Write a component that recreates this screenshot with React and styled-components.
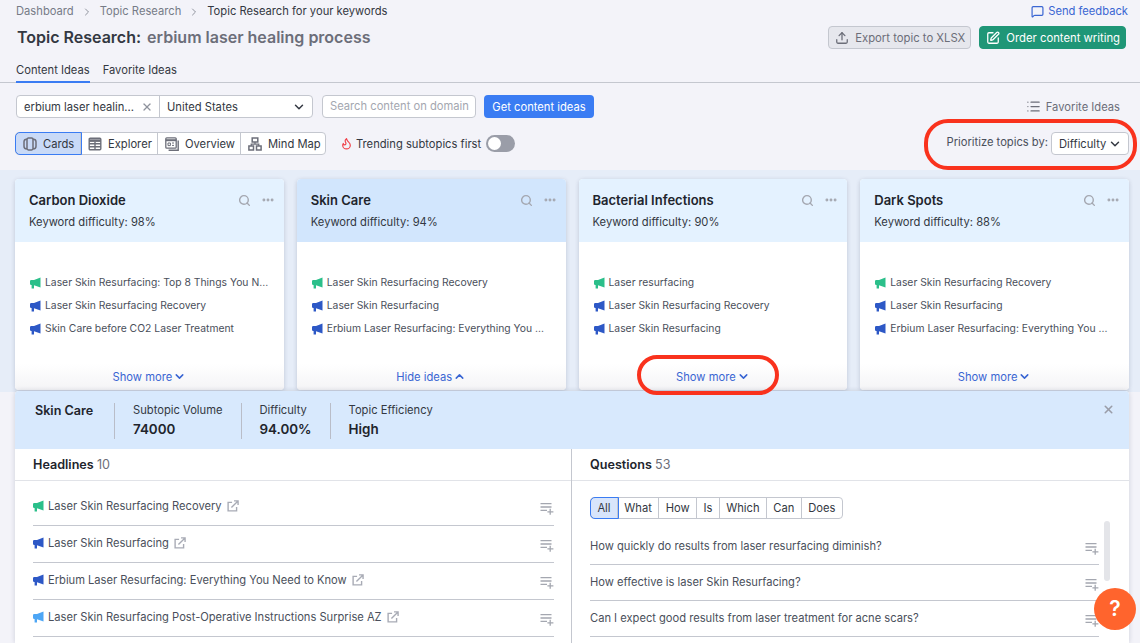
import React from "react";
import styled, { createGlobalStyle } from "styled-components";
import {
  ChevronDown, ChevronUp, ChevronRight, X, Upload, SquarePen, List, Search, Ellipsis,
  MessageSquare, Flame,
} from "lucide-react";

const GlobalStyle = createGlobalStyle`
  html, body { margin: 0; padding: 0; height: 643px; overflow: hidden; background: #f3f3f9; }
  body { font-family: Inter, "Liberation Sans", sans-serif; font-size: 11.2px; color: #333842; }
  * { box-sizing: border-box; }
`;

const Page = styled.div`
  position: relative;
  width: 1140px;
  height: 643px;
  overflow: hidden;
`;

const Head = styled.div`
  height: 83px;
  border-bottom: 1px solid #c4c7cf;
  display: flex;
  flex-direction: column;
`;

const Crumbs = styled.div`
  height: 24px;
  padding: 5px 12px 0 16px;
  display: flex;
  align-items: flex-start;
  color: #767b87;
  line-height: 13px;
  svg { margin: 1px 7px 0; color: #8f939d; }
  b { font-weight: 400; color: #333842; }
`;

const Feedback = styled.a`
  margin-left: auto;
  color: #3a66d3;
  display: flex;
  align-items: center;
  gap: 4px;
  svg { margin: 0; color: #3a66d3; }
`;

const TitleRow = styled.div`
  height: 27px;
  padding: 0 14px 0 18px;
  display: flex;
  align-items: center;
`;

const Title = styled.h1`
  margin: 0 0 0 -1px;
  font-size: 16px;
  font-weight: 600;
  color: #333842;
  span { color: #6c6e79; margin-left: 6px; }
`;

const TitleActions = styled.div`
  margin: 2px 0 0 auto;
  display: flex;
  gap: 8px;
`;

const ActionButton = styled.button`
  height: 23px;
  padding: 0 5px 0 6px;
  border-radius: 4px;
  font: 400 11.3px Inter, sans-serif;
  display: flex;
  align-items: center;
  gap: 6px;
  border: 1px solid ${(p) => (p.$green ? "#1f9677" : "#c4c7cf")};
  background: ${(p) => (p.$green ? "#1f9677" : "#e6e7ed")};
  color: ${(p) => (p.$green ? "#fff" : "#6c6e79")};
`;

const Tabs = styled.div`
  margin-top: 13px;
  padding-left: 16px;
  display: flex;
  gap: 13px;
  height: 19px;
`;

const Tab = styled.div`
  line-height: 15px;
  color: #333842;
  margin-bottom: -1px;
  border-bottom: ${(p) => (p.$active ? "2px solid #3a7cf3" : "none")};
`;

const Controls = styled.div`
  height: 87px;
  padding: 12px 11px 0 15px;
  display: grid;
  grid-template-columns: 1fr auto;
  grid-template-rows: 23px 23px;
  row-gap: 14px;
  align-items: center;
`;

const Row = styled.div`
  display: flex;
  align-items: center;
`;

const Combined = styled.div`
  display: flex;
  width: 297px;
  height: 23px;
  margin-left: 1px;
  border: 1px solid #c4c7cf;
  border-radius: 4px;
  background: #fff;
`;

const KeywordInput = styled.div`
  width: 143px;
  padding: 0 6px 0 7px;
  border-right: 1px solid #c4c7cf;
  display: flex;
  align-items: center;
  justify-content: space-between;
  color: #333842;
  white-space: nowrap;
  svg { color: #8f939d; flex: none; }
`;

const CountrySelect = styled.div`
  flex: 1;
  padding: 0 6px 0 7px;
  display: flex;
  align-items: center;
  justify-content: space-between;
  color: #333842;
`;

const DomainInput = styled.div`
  width: 154px;
  height: 23px;
  margin-left: 9px;
  padding: 0 7px;
  border: 1px solid #c4c7cf;
  border-radius: 4px;
  background: #fff;
  color: #a4a7b0;
  line-height: 21px;
  white-space: nowrap;
  overflow: hidden;
`;

const Primary = styled.button`
  width: 110px;
  height: 23px;
  margin-left: 8px;
  border: 0;
  border-radius: 4px;
  background: #3a7cf3;
  color: #fff;
  font: 400 11.2px Inter, sans-serif;
`;

const FavoriteLink = styled.div`
  justify-self: end;
  margin-right: 9px;
  display: flex;
  align-items: center;
  gap: 5px;
  color: #6c6e79;
`;

const ViewGroup = styled.div`
  display: flex;
  height: 23px;
  width: 311px;
  border: 1px solid #c4c7cf;
  border-radius: 4px;
  background: #fff;
`;

const ViewButton = styled.div`
  width: ${(p) => p.$w}px;
  display: flex;
  align-items: center;
  gap: 6px;
  padding-left: 7px;
  color: #333842;
  border-right: ${(p) => (p.$last ? "none" : "1px solid #c4c7cf")};
  svg { color: #6c6e79; flex: none; }
  ${(p) => p.$active && `
    background: #c9daf7;
    outline: 1px solid #3a7cf3;
    border-radius: 4px 0 0 4px;
  `}
`;

const Trending = styled.div`
  margin-left: 14px;
  display: flex;
  align-items: center;
  gap: 3px;
  color: #333842;
  svg { color: #f0424b; }
`;

const Toggle = styled.div`
  width: 29px;
  height: 17px;
  margin-left: 5px;
  padding: 2px;
  border-radius: 9px;
  background: #9a9da8;
  &::before {
    content: "";
    display: block;
    width: 13px;
    height: 13px;
    border-radius: 50%;
    background: #fff;
  }
`;

const Prioritize = styled.div`
  display: flex;
  align-items: center;
  gap: 3px;
  color: #4a4f5b;
  span { margin-top: -3px; }
`;

const SortSelect = styled.div`
  width: 78px;
  height: 23px;
  padding: 0 6px 0 7px;
  border: 1px solid #c4c7cf;
  border-radius: 4px;
  background: #fff;
  color: #333842;
  display: flex;
  align-items: center;
  justify-content: space-between;
`;

const Band = styled.div`
  height: 222px;
  padding: 9px 11px 0 15px;
  background: #e6edf8;
  display: grid;
  grid-template-columns: repeat(4, 1fr);
  column-gap: 13px;
`;

const Card = styled.div`
  height: 211px;
  border-radius: 4px;
  background: #fff;
  box-shadow: 0 1px 4px rgba(50, 60, 90, 0.22);
  overflow: hidden;
  display: flex;
  flex-direction: column;
`;

const CardHead = styled.div`
  height: 63px;
  padding: 13px 9px 0 14px;
  background: ${(p) => (p.$active ? "#d2e6fd" : "#e4f2ff")};
  line-height: 13px;
`;

const CardTitleRow = styled.div`
  display: flex;
  align-items: center;
  height: 16px;
  margin-bottom: 8px;
  svg { color: #a4a7b0; }
`;

const CardTitle = styled.div`
  font-size: 13px;
  font-weight: 600;
  color: #21242c;
  margin-right: auto;
`;

const CardBody = styled.div`
  flex: 1;
  padding: 34px 14px 0 15px;
  display: flex;
  flex-direction: column;
  gap: 10px;
`;

const Idea = styled.div`
  height: 13px;
  line-height: 13px;
  display: flex;
  align-items: center;
  gap: 4px;
  color: #4a4f5b;
  font-size: 10.35px;
  white-space: nowrap;
`;

const CardFoot = styled.div`
  height: 26px;
  background: linear-gradient(#fff, #f4f4f6);
  color: #3a66d3;
  display: flex;
  align-items: center;
  justify-content: center;
  gap: 1px;
  padding-bottom: 1px;
`;

const Detail = styled.div`
  width: 1114px;
  height: 252px;
  margin: -1px 0 0 15px;
  border-radius: 4px 4px 0 0;
  background: #fff;
  box-shadow: 0 0 5px rgba(50, 60, 90, 0.2);
  overflow: hidden;
  position: relative;
`;

const DetailHead = styled.div`
  height: 58px;
  padding: 12px 15px 0 20px;
  background: #d8e9fd;
  display: flex;
  align-items: flex-start;
`;

const DetailName = styled.div`
  width: 79px;
  font-size: 12.6px;
  font-weight: 600;
  color: #21242c;
  line-height: 16px;
  white-space: nowrap;
`;

const Stat = styled.div`
  height: 36px;
  padding: 0 18px 0 18px;
  border-left: 1px solid #b9bdc8;
  font-size: 11.2px;
  line-height: 14px;
  color: #333842;
  strong {
    display: block;
    margin-top: 4px;
    font-size: 13.4px;
    line-height: 16px;
    font-weight: 600;
    color: #21242c;
  }
`;

const CloseBtn = styled.div`
  margin: 0 -1px 0 auto;
  color: #9a9da8;
`;

const Columns = styled.div`
  display: grid;
  grid-template-columns: 556px 1fr;
`;

const Column = styled.div`
  height: 194px;
  border-left: ${(p) => (p.$right ? "1px solid #c4c7cf" : "none")};
`;

const ColumnTitle = styled.div`
  height: 32px;
  padding-left: 18px;
  border-bottom: 1px solid #e1e3e8;
  line-height: 31px;
  font-size: 12.6px;
  font-weight: 600;
  color: #21242c;
  span { font-weight: 400; color: #6c6e79; }
`;

const HeadlineList = styled.div`
  padding: 8px 17px 0 18px;
`;

const ListRow = styled.div`
  height: ${(p) => p.$h || 37}px;
  border-bottom: 1px solid #c4c7cf;
  display: flex;
  align-items: center;
  gap: 4px;
  padding-bottom: ${(p) => (p.$h ? 1 : 2)}px;
  color: #4a4f5b;
  font-size: 11.15px;
  svg.ext { color: #a8abb5; margin-left: 1px; }
  svg.add { color: #a4a7b0; margin-left: auto; margin-top: 5px; }
`;

const Questions = styled.div`
  padding: 16px 30px 0 18px;
  position: relative;
`;

const Filters = styled.div`
  display: flex;
  width: fit-content;
  height: 22px;
  margin-bottom: 10px;
  border: 1px solid #c4c7cf;
  border-radius: 4px;
`;

const Filter = styled.div`
  padding: 0 6.4px;
  line-height: 20px;
  color: #333842;
  border-right: ${(p) => (p.$last ? "none" : "1px solid #c4c7cf")};
  ${(p) => p.$active && `
    background: #d8e5fb;
    outline: 1px solid #3a7cf3;
    border-radius: 4px 0 0 4px;
  `}
`;

const Scrollbar = styled.div`
  position: absolute;
  top: 40px;
  right: 19px;
  width: 6px;
  height: 60px;
  border-radius: 3px;
  background: #e4e5e9;
`;

const Help = styled.div`
  position: absolute;
  left: 1094px;
  top: 588px;
  width: 42px;
  height: 42px;
  border-radius: 50%;
  background: #ff642d;
  color: #fff;
  font-size: 21px;
  font-weight: 600;
  text-align: center;
  line-height: 42px;
`;

const Ring = styled.div`
  position: absolute;
  left: ${(p) => p.$x}px;
  top: ${(p) => p.$y}px;
  width: ${(p) => p.$w}px;
  height: ${(p) => p.$h}px;
  border: 4px solid #f9321d;
  border-radius: ${(p) => p.$r}px;
  pointer-events: none;
`;

const Megaphone = ({ color }) => (
  <svg width="11" height="12" viewBox="0 0 11 12" style={{ flex: "none" }}>
    <path fill={color} d="M10.5 0.5v10L4 8.2v3.3H1.6V8H1.2A1.2 1.2 0 0 1 0 6.8V4.2A1.2 1.2 0 0 1 1.2 3H4z" />
  </svg>
);

const CardsIcon = () => (
  <svg width="14" height="14" viewBox="0 0 14 14" fill="none" stroke="currentColor">
    <rect x="1" y="2.2" width="12" height="9.6" rx="2.6" strokeWidth="1.5" />
    <rect x="4" y="1" width="6" height="12" rx="1.4" fill="#c9daf7" strokeWidth="1.5" />
  </svg>
);

const TableIcon = () => (
  <svg width="14" height="14" viewBox="0 0 14 14" fill="none" stroke="currentColor" strokeWidth="1.4">
    <rect x="1.2" y="1.2" width="11.6" height="11.6" rx="1" />
    <path d="M1.2 3.6h11.6" strokeWidth="2.6" />
    <path d="M1.2 6.8h11.6M1.2 9.8h11.6M7 4.8v8" />
  </svg>
);

const OverviewIcon = () => (
  <svg width="14" height="14" viewBox="0 0 14 14" fill="none" stroke="currentColor" strokeWidth="1.3">
    <rect x="0.8" y="0.8" width="10.4" height="10.4" rx="1" />
    <path d="M0.8 3.2h10.4" strokeWidth="2" />
    <path d="M3 6h2.4v2.6H3zM7 6h2M7 8.4h2" strokeWidth="1" />
    <path d="M13.2 3.4v9.8H3.6" strokeWidth="1.4" />
  </svg>
);

const MapIcon = () => (
  <svg width="14" height="14" viewBox="0 0 14 14" fill="none" stroke="currentColor" strokeWidth="1.5">
    <rect x="4.2" y="1" width="5.6" height="4" />
    <rect x="0.9" y="9" width="4.6" height="4" />
    <rect x="8.5" y="9" width="4.6" height="4" />
    <path d="M7 5v2.2M3.2 9V7.2h7.6V9" strokeWidth="1.2" />
  </svg>
);

const OpenIcon = () => (
  <svg className="ext" width="12" height="12" viewBox="0 0 13 13" fill="none" stroke="currentColor" strokeWidth="1.5">
    <path d="M5.5 2.6H1.2v9.2h9.2V7.5" />
    <path d="M4.8 8.2L11.4 1.6M7.6 1h4.4v4.4" />
  </svg>
);

const AddIcon = () => (
  <svg className="add" width="14" height="13" viewBox="0 0 14 13" fill="none" stroke="currentColor" strokeWidth="1.3">
    <path d="M0.5 1.6h11M0.5 5h11M0.5 8.4h6.5" />
    <path d="M10.2 6.8v6M7.4 9.8h6" />
  </svg>
);

const GREEN = "#2bbf8a";
const BLUE = "#2d58c6";
const SKY = "#4da6f5";

const cards = [
  { title: "Carbon Dioxide", kd: "98%", ideas: ["Laser Skin Resurfacing: Top 8 Things You N...", "Laser Skin Resurfacing Recovery", "Skin Care before CO2 Laser Treatment"] },
  { title: "Skin Care", kd: "94%", active: true, ideas: ["Laser Skin Resurfacing Recovery", "Laser Skin Resurfacing", "Erbium Laser Resurfacing: Everything You ..."] },
  { title: "Bacterial Infections", kd: "90%", ideas: ["Laser resurfacing", "Laser Skin Resurfacing Recovery", "Laser Skin Resurfacing"] },
  { title: "Dark Spots", kd: "88%", ideas: ["Laser Skin Resurfacing Recovery", "Laser Skin Resurfacing", "Erbium Laser Resurfacing: Everything You ..."] },
];

const headlines = [
  ["Laser Skin Resurfacing Recovery", GREEN],
  ["Laser Skin Resurfacing", BLUE],
  ["Erbium Laser Resurfacing: Everything You Need to Know", BLUE],
  ["Laser Skin Resurfacing Post-Operative Instructions Surprise AZ", SKY],
];

const questions = [
  "How quickly do results from laser resurfacing diminish?",
  "How effective is laser Skin Resurfacing?",
  "Can I expect good results from laser treatment for acne scars?",
];

const filters = ["All", "What", "How", "Is", "Which", "Can", "Does"];

const App = () => {
  return (
    <Page>
      <GlobalStyle />
      <Head>
        <Crumbs>
          Dashboard <ChevronRight size={12} /> Topic Research <ChevronRight size={12} />
          <b>Topic Research for your keywords</b>
          <Feedback><MessageSquare size={13} strokeWidth={2.2} /> Send feedback</Feedback>
        </Crumbs>
        <TitleRow>
          <Title>Topic Research:<span>erbium laser healing process</span></Title>
          <TitleActions>
            <ActionButton><Upload size={14} strokeWidth={2.2} /> Export topic to XLSX</ActionButton>
            <ActionButton $green><SquarePen size={14} strokeWidth={2.2} /> Order content writing</ActionButton>
          </TitleActions>
        </TitleRow>
        <Tabs>
          <Tab $active>Content Ideas</Tab>
          <Tab>Favorite Ideas</Tab>
        </Tabs>
      </Head>

      <Controls>
        <Row>
          <Combined>
            <KeywordInput>erbium laser healin... <X size={12} strokeWidth={2.6} /></KeywordInput>
            <CountrySelect>United States <ChevronDown size={14} strokeWidth={2.5} /></CountrySelect>
          </Combined>
          <DomainInput>Search content on domain</DomainInput>
          <Primary>Get content ideas</Primary>
        </Row>
        <FavoriteLink><List size={15} /> Favorite Ideas</FavoriteLink>
        <Row>
          <ViewGroup>
            <ViewButton $w={65} $active><CardsIcon /> Cards</ViewButton>
            <ViewButton $w={77}><TableIcon /> Explorer</ViewButton>
            <ViewButton $w={83}><OverviewIcon /> Overview</ViewButton>
            <ViewButton $w={84} $last><MapIcon /> Mind Map</ViewButton>
          </ViewGroup>
          <Trending><Flame size={13} strokeWidth={2.2} /> Trending subtopics first</Trending>
          <Toggle />
        </Row>
        <Prioritize>
          <span>Prioritize topics by:</span>
          <SortSelect>Difficulty <ChevronDown size={14} strokeWidth={2.5} /></SortSelect>
        </Prioritize>
      </Controls>

      <Band>
        {cards.map((card) => (
          <Card key={card.title}>
            <CardHead $active={card.active}>
              <CardTitleRow>
                <CardTitle>{card.title}</CardTitle>
                <Search size={13} strokeWidth={2.6} />
                <Ellipsis size={14} strokeWidth={3} style={{ marginLeft: 10 }} />
              </CardTitleRow>
              Keyword difficulty: {card.kd}
            </CardHead>
            <CardBody>
              {card.ideas.map((idea, i) => (
                <Idea key={idea}>
                  <Megaphone color={i === 0 ? GREEN : BLUE} />
                  {idea}
                </Idea>
              ))}
            </CardBody>
            <CardFoot>
              {card.active ? "Hide ideas" : "Show more"}
              {card.active ? <ChevronUp size={13} strokeWidth={2.8} /> : <ChevronDown size={13} strokeWidth={2.8} />}
            </CardFoot>
          </Card>
        ))}
      </Band>

      <Detail>
        <DetailHead>
          <DetailName>Skin Care</DetailName>
          <Stat>Subtopic Volume<strong>74000</strong></Stat>
          <Stat>Difficulty<strong>94.00%</strong></Stat>
          <Stat>Topic Efficiency<strong>High</strong></Stat>
          <CloseBtn><X size={13} strokeWidth={2.8} /></CloseBtn>
        </DetailHead>
        <Columns>
          <Column>
            <ColumnTitle>Headlines <span>10</span></ColumnTitle>
            <HeadlineList>
              {headlines.map(([text, color]) => (
                <ListRow key={text}>
                  <Megaphone color={color} />
                  {text}
                  <OpenIcon />
                  <AddIcon />
                </ListRow>
              ))}
            </HeadlineList>
          </Column>
          <Column $right>
            <ColumnTitle>Questions <span>53</span></ColumnTitle>
            <Questions>
              <Filters>
                {filters.map((f, i) => (
                  <Filter key={f} $active={i === 0} $last={i === filters.length - 1}>{f}</Filter>
                ))}
              </Filters>
              {questions.map((q) => (
                <ListRow key={q} $h={36}>
                  {q}
                  <AddIcon />
                </ListRow>
              ))}
              <Scrollbar />
            </Questions>
          </Column>
        </Columns>
      </Detail>

      <Ring $x={924} $y={119} $w={213} $h={51} $r={24} />
      <Ring $x={637} $y={355} $w={142} $h={40} $r={20} />
      <Help>?</Help>
    </Page>
  );
};

export default App;
